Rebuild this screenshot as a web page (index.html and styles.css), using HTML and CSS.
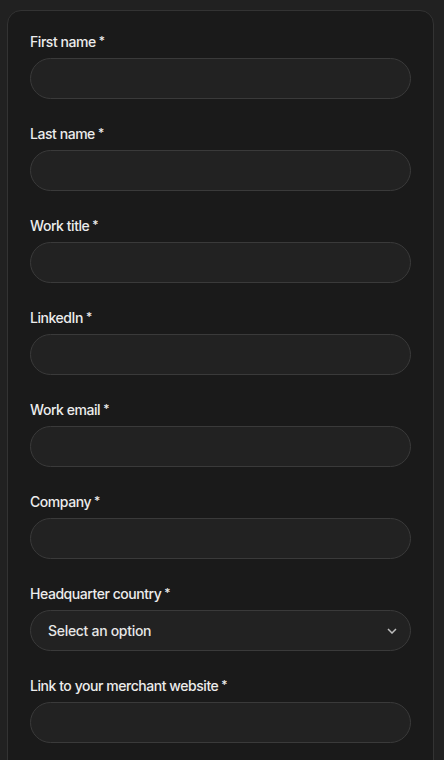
FILE: index.html
```html
<!DOCTYPE html>
<html lang="en">
<head>
<meta charset="utf-8">
<title>Form</title>
<link rel="stylesheet" href="styles.css">
</head>
<body>
<form class="card">
  <div class="field">
    <label class="label">First name<span class="req">*</span></label>
    <input class="input" type="text">
  </div>
  <div class="field">
    <label class="label">Last name<span class="req">*</span></label>
    <input class="input" type="text">
  </div>
  <div class="field">
    <label class="label">Work title<span class="req">*</span></label>
    <input class="input" type="text">
  </div>
  <div class="field">
    <label class="label">LinkedIn<span class="req">*</span></label>
    <input class="input" type="text">
  </div>
  <div class="field">
    <label class="label">Work email<span class="req">*</span></label>
    <input class="input" type="text">
  </div>
  <div class="field">
    <label class="label">Company<span class="req">*</span></label>
    <input class="input" type="text">
  </div>
  <div class="field">
    <label class="label">Headquarter country<span class="req">*</span></label>
    <div class="select">
      <span class="select-text">Select an option</span>
      <svg class="chevron" width="10" height="6" viewBox="0 0 10 6"><path d="M1 1l4 4 4-4" fill="none" stroke="#bdbdbd" stroke-width="1.5"/></svg>
    </div>
  </div>
  <div class="field">
    <label class="label">Link to your merchant website<span class="req">*</span></label>
    <input class="input" type="text">
  </div>
</form>
</body>
</html>
```
FILE: styles.css
```css
html, body {
  margin: 0;
  background: #212121;
}
body {
  padding: 10px 10px 0 7px;
  font-family: Inter, "Liberation Sans", sans-serif;
  color: #ececec;
}
.card {
  background: #1a1a1a;
  border: 1px solid #333333;
  border-radius: 14px;
  padding: 23px 22px 40px 22px;
  display: flex;
  flex-direction: column;
  gap: 27px;
}
.field {
  display: flex;
  flex-direction: column;
  gap: 8px;
}
.label {
  display: block;
  font-size: 14px;
  line-height: 16px;
  height: 16px;
  font-weight: 500;
  letter-spacing: -0.45px;
  color: #ececec;
}
.req {
  font-size: 12px;
  line-height: 1;
  margin-left: 3px;
  position: relative;
  top: -2px;
}
.input, .select {
  box-sizing: border-box;
  height: 41px;
  width: 100%;
  background: #222222;
  border: 1px solid #3a3a3a;
  border-radius: 21px;
  outline: none;
  margin: 0;
  font: inherit;
}
.select {
  display: flex;
  align-items: center;
  justify-content: space-between;
  padding: 0 13px 0 17px;
}
.select-text {
  font-size: 14px;
  font-weight: 500;
  letter-spacing: -0.3px;
  color: #e6e6e6;
}
.chevron {
  display: block;
}
```
